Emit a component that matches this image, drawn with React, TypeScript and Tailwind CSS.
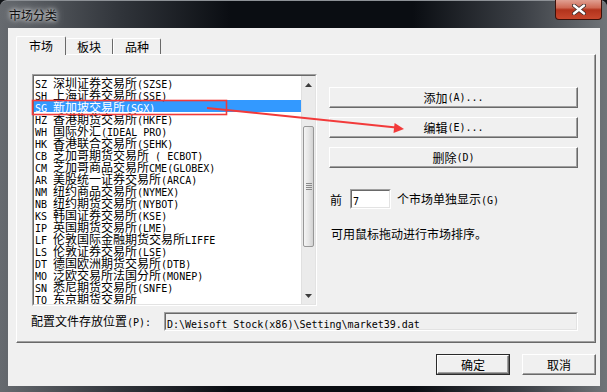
import React from "react";

const markets = [
  "SZ 深圳证券交易所(SZSE)",
  "SH 上海证券交易所(SSE)",
  "SG 新加坡交易所(SGX)",
  "HZ 香港期货交易所(HKFE)",
  "WH 国际外汇(IDEAL PRO)",
  "HK 香港联合交易所(SEHK)",
  "CB 芝加哥期货交易所 ( ECBOT)",
  "CM 芝加哥商品交易所CME(GLOBEX)",
  "AR 美股统一证券交易所(ARCA)",
  "NM 纽约商品交易所(NYMEX)",
  "NB 纽约期货交易所(NYBOT)",
  "KS 韩国证券交易所(KSE)",
  "IP 英国期货交易所(LME)",
  "LF 伦敦国际金融期货交易所LIFFE",
  "LS 伦敦证券交易所(LSE)",
  "DT 德国欧洲期货交易所(DTB)",
  "MO 泛欧交易所法国分所(MONEP)",
  "SN 悉尼期货交易所(SNFE)",
  "TQ 东京期货交易所",
];

// ascii goes in a 6px-wide mono, cjk in 12px, like the old SimSun dialogs
function Mix({ text }: { text: string }) {
  const parts = text.match(/[\x00-\x7f]+|[^\x00-\x7f]+/g) || [];
  return (
    <>
      {parts.map((p, i) =>
        p.charCodeAt(0) < 128 ? (
          <span key={i} className="font-['DejaVu_Sans_Mono',monospace] text-[10px]">
            {p}
          </span>
        ) : (
          <span key={i} className="font-['Noto_Sans_CJK_SC',sans-serif] text-[12px]">
            {p}
          </span>
        )
      )}
    </>
  );
}

function Button({ label, className = "" }: { label: string; className?: string }) {
  return (
    <div
      className={
        "flex items-center justify-center h-[21px] bg-[#f0f0f0] border border-t-white border-l-white border-r-[#696969] border-b-[#696969] shadow-[inset_-1px_-1px_0_#a0a0a0] leading-[12px] whitespace-pre text-black " +
        className
      }
    >
      <Mix text={label} />
    </div>
  );
}

function Sunken({ className = "", children }: { className?: string; children?: React.ReactNode }) {
  return (
    <div className={"border border-t-[#a0a0a0] border-l-[#a0a0a0] border-r-white border-b-white " + className}>
      <div className="w-full h-full border border-t-[#696969] border-l-[#696969] border-r-[#e3e3e3] border-b-[#e3e3e3]">
        {children}
      </div>
    </div>
  );
}

function ScrollBar() {
  return (
    <div className="w-[14px] h-full flex flex-col bg-[#ebebeb] border-l border-[#e0e0e0]">
      <div className="h-[17px] flex items-center justify-center">
        <svg width="7" height="4" viewBox="0 0 7 4">
          <path d="M3.5 0L7 4H0Z" fill="#3c3c3c" />
        </svg>
      </div>
      <div className="h-[33px]" />
      <div className="h-[121px] mx-[1px] rounded-[2px] border border-[#979797] bg-[linear-gradient(90deg,#f4f4f4_0%,#e6e6e6_50%,#d2d2d2_100%)] flex flex-col items-center justify-center gap-[1px]">
        <div className="w-[6px] h-[1px] bg-[#8a8a8a]" />
        <div className="w-[6px] h-[1px] bg-[#8a8a8a]" />
        <div className="w-[6px] h-[1px] bg-[#8a8a8a]" />
        <div className="w-[6px] h-[1px] bg-[#8a8a8a]" />
      </div>
      <div className="flex-1" />
      <div className="h-[17px] flex items-center justify-center">
        <svg width="7" height="4" viewBox="0 0 7 4">
          <path d="M0 0H7L3.5 4Z" fill="#3c3c3c" />
        </svg>
      </div>
    </div>
  );
}

export default function App() {
  return (
    <div className="relative w-[607px] h-[392px] overflow-hidden bg-[#0f1216]">
      <div className="flex flex-col w-full h-full rounded-t-[7px] border-t border-[#8d9196] bg-[linear-gradient(90deg,#666a6f_0%,#30343a_20%,#0a0d12_38%,#0a0d12_68%,#3c4046_86%,#707478_100%)]">
        {/* Title bar */}
        <div className="h-[27px] shrink-0 flex items-start justify-between">
          <span className="ml-[9px] mt-[6px] text-[12px] leading-[16px] text-[#101010] font-['Noto_Sans_CJK_SC',sans-serif] [text-shadow:0_0_4px_#fff,0_0_8px_rgba(255,255,255,0.8)]">
            市场分类
          </span>
          <div className="mr-[5px] -mt-[1px] w-[47px] h-[20px] rounded-b-[4px] border border-t-0 border-[#3d1009] bg-[linear-gradient(180deg,#e0a092_0%,#cf6a55_40%,#b2331c_52%,#c8472d_100%)] flex items-center justify-center">
            <svg width="14" height="11" viewBox="0 0 14 11">
              <path d="M2 1.5L12 9.5M12 1.5L2 9.5" stroke="#3a2a28" strokeWidth="4" strokeLinecap="round" />
              <path d="M2 1.5L12 9.5M12 1.5L2 9.5" stroke="#ffffff" strokeWidth="2.4" strokeLinecap="round" />
            </svg>
          </div>
        </div>

        {/* Client area */}
        <div className="ml-[8px] mr-[7px] mb-[6px] flex-1 bg-[#f0f0f0] pl-[8px] pr-[4px] pt-[8px] text-black">
          {/* Tabs */}
          <div className="h-[18px] flex items-end">
            <div className="relative z-10 -mb-[1px] w-[50px] h-[19px] bg-[#f0f0f0] border-t border-l border-r border-t-white border-l-white border-r-[#696969] rounded-t-[2px] flex items-center justify-center text-[12px] leading-[14px] font-['Noto_Sans_CJK_SC',sans-serif]">
              市场
            </div>
            <div className="w-[47px] h-[16px] bg-[#f0f0f0] border-t border-r border-t-white border-r-[#696969] rounded-t-[2px] flex items-center justify-center text-[12px] leading-[14px] font-['Noto_Sans_CJK_SC',sans-serif]">
              板块
            </div>
            <div className="w-[48px] h-[16px] bg-[#f0f0f0] border-t border-r border-l border-t-white border-l-white border-r-[#696969] rounded-t-[2px] flex items-center justify-center text-[12px] leading-[14px] font-['Noto_Sans_CJK_SC',sans-serif]">
              品种
            </div>
          </div>

          {/* Tab panel */}
          <div className="h-[289px] border border-t-white border-l-white border-r-[#696969] border-b-[#696969] shadow-[inset_-1px_-1px_0_#a0a0a0] pl-[15px] pt-[19px]">
            <div className="flex">
              <Sunken className="w-[285px] h-[232px] bg-white">
                <div className="flex h-full">
                  <div className="flex-1 overflow-hidden">
                    {markets.map((m, i) => (
                      <div
                        key={m}
                        className={
                          i === 2
                            ? "h-[12px] leading-[12px] pl-[1px] whitespace-pre bg-[#3399ff] text-white"
                            : "h-[12px] leading-[12px] pl-[1px] whitespace-pre text-black"
                        }
                      >
                        <Mix text={m} />
                      </div>
                    ))}
                  </div>
                  <ScrollBar />
                </div>
              </Sunken>

              <div className="ml-[12px] w-[249px] pt-[13px] flex flex-col">
                <Button label="添加(A)..." />
                <Button label="编辑(E)..." className="mt-[9px]" />
                <Button label="删除(D)" className="mt-[9px]" />
                <div className="mt-[21px] h-[20px] flex items-center leading-[12px] whitespace-pre">
                  <span className="ml-[1px]">
                    <Mix text="前" />
                  </span>
                  <Sunken className="ml-[8px] w-[41px] h-[20px] bg-white">
                    <div className="pl-[1px] pt-[2px] leading-[12px]">
                      <Mix text="7" />
                    </div>
                  </Sunken>
                  <span className="ml-[6px]">
                    <Mix text="个市场单独显示(G)" />
                  </span>
                </div>
                <div className="mt-[18px] ml-[2px] leading-[12px]">
                  <Mix text="可用鼠标拖动进行市场排序。" />
                </div>
              </div>
            </div>

            <div className="mt-[6px] h-[19px] flex items-center">
              <div className="-ml-[1px] w-[133px] leading-[12px] whitespace-pre">
                <Mix text="配置文件存放位置(P):" />
              </div>
              <Sunken className="w-[414px] h-[19px] bg-[#f0f0f0]">
                <div className="pl-[1px] pt-[2px] leading-[12px] whitespace-pre">
                  <Mix text="D:\Weisoft Stock(x86)\Setting\market39.dat" />
                </div>
              </Sunken>
            </div>
          </div>

          {/* Dialog buttons */}
          <div className="mt-[11px] flex justify-end gap-[12px]">
            <div className="w-[74px] h-[21px] border border-[#2a2a2a]">
              <Button label="确定" className="h-full" />
            </div>
            <Button label="取消" className="w-[74px]" />
          </div>
        </div>
      </div>

      {/* red annotation drawn over the dialog */}
      <svg className="absolute left-0 top-0 pointer-events-none" width="607" height="392" viewBox="0 0 607 392">
        <rect x="32.5" y="100.5" width="194" height="14" fill="none" stroke="#f23a3a" strokeWidth="1.6" />
        <line x1="207" y1="108" x2="396" y2="127.5" stroke="#f23a3a" strokeWidth="2" />
        <polygon points="404,129 394.6,123 393.5,132.9" fill="#f23a3a" />
      </svg>
    </div>
  );
}
